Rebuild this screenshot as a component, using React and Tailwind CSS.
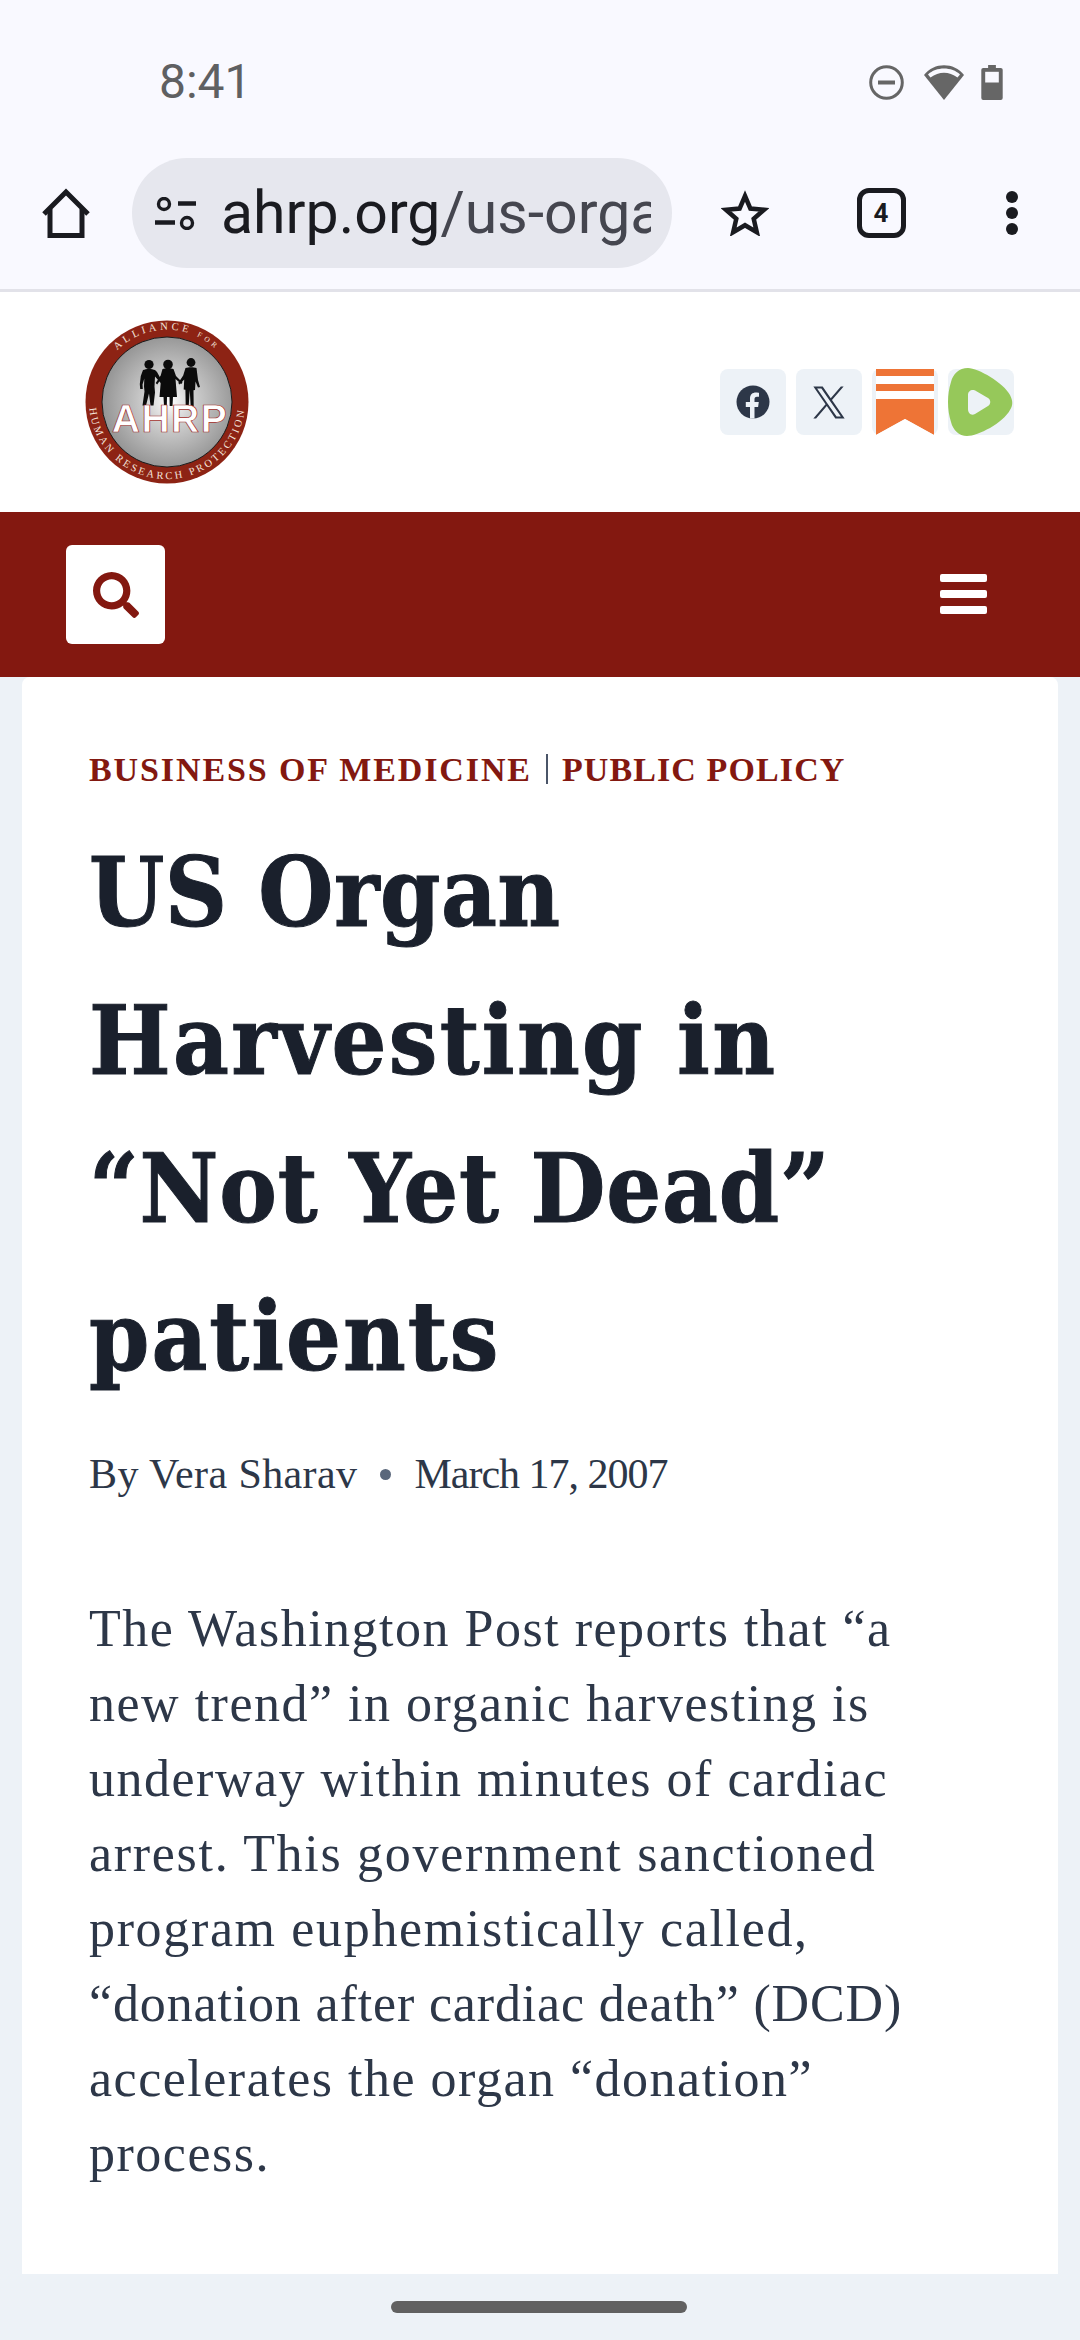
import React from "react";

const serif = "font-['Liberation_Serif',serif]";

function People() {
  return (
    <g fill="#0b0b0b" transform="translate(1 2.500)">
      <circle cx="63" cy="43" r="4.600" />
      <path d="M57 48.500c3-1.500 9-1.500 12 0l2 2 5.500 10-1.300 1.500-6.200-7-.5 10 .5 6-1.500 13h-3l-1.500-12-3 12h-3.500l2-14 -.5-5 .3-8-1.800 6 .3 4.500h-2.600l-.4-5 1-8z" />
      <circle cx="82" cy="43" r="4.800" />
      <path d="M76.500 47.500c3-1 8-1 11 0l2.500 7 6.500 6.500-1.200 1.500-5.800-5 1.500 18h-4l-.5 9h-2.800l-.2-9h-2.500l-.2 9h-2.800l-.5-9h-4l1.500-18-3.800 5.500-1.500-1.500 5-7.500z" />
      <circle cx="105" cy="41" r="4.400" />
      <path d="M99.500 46.500c3-1 8-1 11 0l1.500 12 2 7-2 .5-2.500-6-.5 8.500-1.500.3.200 15.700h-3l-1-16-1 16h-3l-.3-16.200-1.700-.3.500-10-4.500 5-1.500-1.500 5-7.500z" />
    </g>
  );
}

function Logo() {
  return (
    <svg width="166" height="166" viewBox="0 0 166 166">
      <defs>
        <radialGradient id="g" cx="52%" cy="50%" r="52%">
          <stop offset="0%" stopColor="#ffffff" />
          <stop offset="35%" stopColor="#cfcfcf" />
          <stop offset="100%" stopColor="#949494" />
        </radialGradient>
        <path id="top" d="M 25 40 A 70 70 0 0 1 139 40" />
        <path id="bot" d="M 4 82 A 78 78 0 0 0 160 82" />
      </defs>
      <circle cx="82" cy="83" r="81.500" fill="#8d2314" />
      <circle cx="82" cy="83" r="65" fill="url(#g)" stroke="#1a1a1a" strokeWidth="1" />
      <text fontFamily="Liberation Serif, serif" fontSize="10.500" fill="#f3e3dc" letterSpacing="3.400" textAnchor="middle">
        <textPath href="#top" startOffset="50%">
          ALLIANCE <tspan fontSize="7.500">FOR</tspan>
        </textPath>
      </text>
      <text fontFamily="Liberation Serif, serif" fontSize="10.500" fill="#f3e3dc" letterSpacing="2.600" textAnchor="middle">
        <textPath href="#bot" startOffset="50%">HUMAN RESEARCH PROTECTION</textPath>
      </text>
      <People />
      <text x="85" y="113" textAnchor="middle" fontFamily="Liberation Sans, sans-serif" fontSize="39" fontWeight="700" letterSpacing="1.500" fill="#fff" stroke="#a02c28" strokeWidth="0.700">AHRP</text>
    </svg>
  );
}

function IconBox({ children }) {
  return <div className="w-[66px] h-[66px] rounded-[8px] bg-[#edf2f7] flex items-center justify-center">{children}</div>;
}

export default function App() {
  return (
    <div className="w-[1080px] h-[2340px] bg-[#edf2f7] flex flex-col overflow-hidden relative">
      {/* Status bar */}
      <div className="h-[145px] shrink-0 bg-[#f9f9ff] flex items-start justify-between pl-[159px] pr-[77px] pt-[57px]">
        <span className="font-['Roboto',sans-serif] text-[48px] leading-[50px] text-[#5f6062]">8:41</span>
        <div className="flex items-center pt-[8px]">
          <svg width="35" height="35" viewBox="0 0 35 35" fill="none">
            <circle cx="17.500" cy="17.500" r="15.800" stroke="#666" strokeWidth="3" />
            <rect x="9" y="15.500" width="17" height="4" fill="#666" />
          </svg>
          <svg width="40" height="35" viewBox="0 0 40 35" className="ml-[20px]">
            <path d="M20 35 L0 10 C10 -3 30 -3 40 10 Z" fill="#666" />
            <path d="M4 9.500 C12 1.500 28 1.500 36 9.500 L33.500 12.500 C25 6 15 6 6.500 12.500 Z" fill="#f9f9ff" />
          </svg>
          <svg width="22" height="35" viewBox="0 0 22 36" className="ml-[17px]">
            <path d="M7 0h8v3h5a2 2 0 0 1 2 2v29a2 2 0 0 1-2 2H2a2 2 0 0 1-2-2V5a2 2 0 0 1 2-2h5z" fill="#666" />
            <rect x="4" y="7" width="14" height="11" fill="#f9f9ff" />
          </svg>
        </div>
      </div>

      {/* Browser toolbar */}
      <div className="h-[147px] shrink-0 bg-[#f9f9ff] border-b-[3px] border-[#e2e2e9] flex items-start pt-[13px]">
        <div className="w-[132px] h-[110px] flex items-center justify-center">
          <svg width="50" height="50" viewBox="0 0 50 50" fill="none" stroke="#1a1b20" strokeWidth="5">
            <path d="M9 47.500V21 M41 21V47.500 M6.500 47.500H43.500" />
            <path d="M3 26 L25 4 L47 26" strokeLinejoin="miter" />
          </svg>
        </div>
        <div className="w-[540px] h-[110px] rounded-[55px] bg-[#e6e7ee] flex items-center pl-[23px] pr-[21px] overflow-hidden">
          <svg width="41" height="33" viewBox="0 0 41 33" fill="none" stroke="#1a1b20" strokeWidth="3.400" className="shrink-0">
            <circle cx="9" cy="7" r="5.500" />
            <path d="M23 6.500h18" strokeWidth="4.500" />
            <circle cx="32" cy="26" r="5.500" />
            <path d="M0 25.500h20" strokeWidth="4.500" />
          </svg>
          <div className="ml-[25px] overflow-hidden whitespace-nowrap font-['Roboto',sans-serif] text-[59px] leading-[72px]">
            <span className="text-[#1a1b20]">ahrp.org</span>
            <span className="text-[#45464f]">/us-organ-harvesting</span>
          </div>
        </div>
        <div className="w-[146px] h-[110px] flex items-center justify-center">
          <svg width="48" height="46" viewBox="0 0 48 46" fill="none" stroke="#1a1b20" strokeWidth="4.500">
            <path d="M24 6l5.400 12.600 13.600 1.200-10.300 9 3.100 13.400L24 35.200l-11.800 7 3.100-13.400-10.300-9 13.600-1.200z" />
          </svg>
        </div>
        <div className="w-[126px] h-[110px] flex items-center justify-center">
          <div className="w-[49px] h-[50px] rounded-[12px] border-[5px] border-[#1a1b20] flex items-center justify-center font-['Roboto',sans-serif] font-bold text-[26px] text-[#1a1b20]">4</div>
        </div>
        <div className="w-[136px] h-[110px] flex flex-col items-center justify-center gap-[4px]">
          <span className="w-[12px] h-[12px] rounded-full bg-[#1a1b20]" />
          <span className="w-[12px] h-[12px] rounded-full bg-[#1a1b20]" />
          <span className="w-[12px] h-[12px] rounded-full bg-[#1a1b20]" />
        </div>
      </div>

      {/* Site header */}
      <div className="h-[220px] shrink-0 bg-white flex items-center justify-between pl-[85px] pr-[66px]">
        <Logo />
        <div className="flex items-center gap-[10px]">
          <IconBox>
            <svg width="34" height="34" viewBox="0 0 34 34">
              <circle cx="17" cy="17" r="16.500" fill="#2d3748" />
              <path d="M14 33.500V22h-4.200v-5H14v-3.500C14 9.500 16.400 7.500 20 7.500c1.500 0 3 .3 3 .3v4h-2c-2 0-2.500 1.200-2.500 2.400V17h4.300l-.7 5h-3.600v11.500z" fill="#edf2f7" />
            </svg>
          </IconBox>
          <IconBox>
            <svg width="32" height="33" viewBox="0 0 24 24" fill="#2d3748">
              <path d="M14.234 10.162 22.977 0h-2.072l-7.591 8.824L7.251 0H.258l9.168 13.343L.258 24H2.330l8.016-9.318L16.749 24h6.993zm-2.837 3.299-.929-1.329L3.076 1.560h3.182l5.965 8.532.929 1.329 7.754 11.090h-3.182z" />
            </svg>
          </IconBox>
          <IconBox>
            <svg width="58" height="66" viewBox="0 0 58 66">
              <path d="M0 7h58v8H0zM0 22h58v8H0z" fill="#ffffff" />
              <path d="M0 0h58v7H0zM0 15h58v7H0z M0 30h58v36L29 50 0 66z" fill="#ee7436" />
              <path d="M0 66L29 50l29 16z" fill="#ffffff" />
            </svg>
          </IconBox>
          <IconBox>
            <svg width="66" height="68" viewBox="0 0 66 68" className="-my-[1px] shrink-0">
              <path fillRule="evenodd" d="M20 0C30 0 56 15 62 27c3 6 3 10 0 15C55 55 30 68 19 68 11 68 5 62 3 54-1 42-1 26 3 14 5 6 11 0 20 0zM25 22c-3 0-5 2-5 5v14c0 4 3 7 7 5l13-8c3-2 3-6 0-8l-12-7c-1-1-2-1-3-1z" fill="#96c85a" />
            </svg>
          </IconBox>
        </div>
      </div>

      {/* Red nav */}
      <div className="h-[165px] shrink-0 bg-[#831810] flex items-start justify-between pl-[66px] pr-[93px] pt-[33px]">
        <div className="w-[99px] h-[99px] bg-white rounded-[6px] flex items-center justify-center">
          <svg width="46" height="46" viewBox="0 0 512 512" fill="#831810">
            <path d="M505 442.700L405.300 343c-4.500-4.500-10.600-7-17-7H372c27.600-35.300 44-79.700 44-128C416 93.100 322.900 0 208 0S0 93.100 0 208s93.100 208 208 208c48.300 0 92.700-16.400 128-44v16.300c0 6.400 2.500 12.500 7 17l99.700 99.700c9.400 9.400 24.600 9.400 33.900 0l28.300-28.300c9.400-9.400 9.400-24.600.1-34zM208 336c-70.700 0-128-57.200-128-128 0-70.700 57.200-128 128-128 70.700 0 128 57.200 128 128 0 70.700-57.200 128-128 128z" />
          </svg>
        </div>
        <div className="flex flex-col gap-[8px] pt-[29px]">
          <span className="w-[47px] h-[8px] rounded-[2px] bg-white" />
          <span className="w-[47px] h-[8px] rounded-[2px] bg-white" />
          <span className="w-[47px] h-[8px] rounded-[2px] bg-white" />
        </div>
      </div>

      {/* Article card */}
      <div className={`mx-[22px] h-[1597px] shrink-0 bg-white rounded-t-[8px] pl-[67px] pr-[40px] pt-[70px] ${serif}`}>
        <div className="flex items-center h-[44px] text-[34px] font-bold text-[#831810] whitespace-nowrap">
          <span className="tracking-[1.9px]">BUSINESS OF MEDICINE</span>
          <span className="w-[2px] h-[30px] bg-[#4a5568] mx-[14px]" />
          <span className="tracking-[1.1px]">PUBLIC POLICY</span>
        </div>
        <h1 className="mt-[28px] font-['DejaVu_Serif',serif] [font-stretch:condensed] text-[96px] leading-[148px] font-bold text-[#1a202c] whitespace-nowrap [-webkit-text-stroke:1px_#1a202c]">
          <span className="tracking-[0.500px]">US Organ</span>
          <br />
          <span className="tracking-[2.300px]">Harvesting in</span>
          <br />
          <span className="tracking-[0.800px]">“Not Yet Dead”</span>
          <br />
          <span className="tracking-[2px]">patients</span>
        </h1>
        <div className="mt-[33px] flex items-center text-[42px] leading-[60px] text-[#2d3748] whitespace-nowrap">
          <span className="tracking-[0.400px]">By Vera Sharav</span>
          <span className="w-[11px] h-[11px] rounded-full bg-[#5a677b] mx-[23px]" />
          <span className="-tracking-[1px]">March 17, 2007</span>
        </div>
        <p className="mt-[87px] text-[52px] leading-[75px] text-[#2d3748] tracking-[1.500px] whitespace-nowrap">
          The Washington Post reports that “a
          <br />
          new trend” in organic harvesting is
          <br />
          underway within minutes of cardiac
          <br />
          <span className="tracking-[1.700px]">arrest. This government sanctioned</span>
          <br />
          <span className="tracking-[1.650px]">program euphemistically called,</span>
          <br />
          <span className="tracking-[0.850px]">“donation after cardiac death” (DCD)</span>
          <br />
          accelerates the organ “donation”
          <br />
          process.
        </p>
      </div>

      {/* Gesture pill */}
      <div className="absolute left-[391px] top-[2301px] w-[296px] h-[12px] rounded-full bg-[#616161]" />
    </div>
  );
}
